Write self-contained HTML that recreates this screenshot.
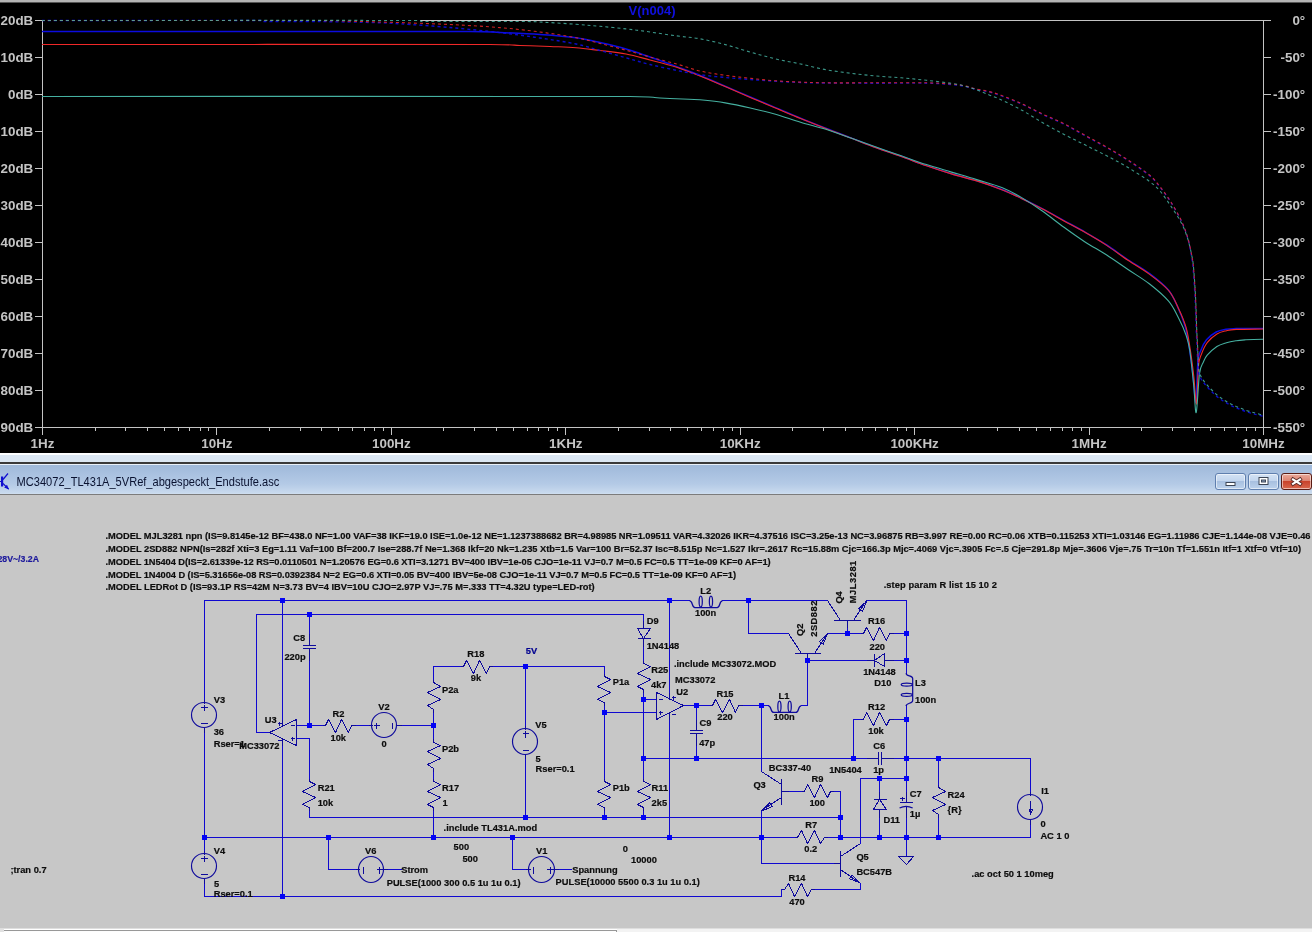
<!DOCTYPE html>
<html lang="de"><head><meta charset="utf-8"><title>LTspice</title>
<style>
html,body{margin:0;padding:0;background:#c7c7c7;}
body{width:1312px;height:932px;overflow:hidden;position:relative;font-family:"Liberation Sans",sans-serif;}
svg{display:block;position:absolute;left:0;will-change:transform;}
#plot{top:0;}
#sch{top:495px;}
#sep1{position:absolute;left:0;top:453px;width:1312px;height:2px;background:#fdfeff;}
#sep2{position:absolute;left:0;top:455px;width:1312px;height:7px;background:#dbe7f3;}
#sep3{position:absolute;left:0;top:462px;width:1312px;height:2px;background:#3a3a3a;}
#tbar{position:absolute;left:0;top:464px;width:1312px;height:30px;background:linear-gradient(#e9f0f9 0,#e9f0f9 1px,#9fb9da 1px,#a9c1e0 10px,#b4cae6 20px,#c9daee 29px,#d2e0f0 30px);}
#tline{position:absolute;left:0;top:494px;width:1312px;height:1px;background:#7c7c7c;}
.btn{position:absolute;top:473px;width:29px;height:15px;border:1px solid #5f7fae;border-radius:3px;background:linear-gradient(#d3e2f4 0,#c3d6ee 45%,#a8c0e0 50%,#bcd2ec 100%);box-shadow:inset 0 0 0 1px rgba(255,255,255,.55);}
#bx{border-color:#5a1c14;background:linear-gradient(#eaa99b 0,#dc8472 45%,#c8432c 50%,#d8684e 100%);}
</style></head><body>
<svg id="plot" width="1312" height="453" viewBox="0 0 1312 453">
<rect x="0" y="0" width="1312" height="453" fill="#000"/>
<rect x="0" y="0" width="1312" height="2" fill="#b4b4b4"/>
<rect x="0" y="2" width="1312" height="1" fill="#555"/>
<g stroke="#c4c4c4" stroke-width="1" shape-rendering="crispEdges" fill="none">
<line x1="42.5" y1="20" x2="42.5" y2="435"/>
<line x1="1263.5" y1="20" x2="1263.5" y2="435"/>
<line x1="35" y1="427.5" x2="1264" y2="427.5"/>
<line x1="420" y1="20.5" x2="1271" y2="20.5"/>
<line x1="35" y1="20.5" x2="42" y2="20.5"/>
<line x1="1264" y1="20.5" x2="1271" y2="20.5"/>
<line x1="35" y1="57.5" x2="42" y2="57.5"/>
<line x1="1264" y1="57.5" x2="1271" y2="57.5"/>
<line x1="35" y1="94.5" x2="42" y2="94.5"/>
<line x1="1264" y1="94.5" x2="1271" y2="94.5"/>
<line x1="35" y1="131.5" x2="42" y2="131.5"/>
<line x1="1264" y1="131.5" x2="1271" y2="131.5"/>
<line x1="35" y1="168.5" x2="42" y2="168.5"/>
<line x1="1264" y1="168.5" x2="1271" y2="168.5"/>
<line x1="35" y1="205.5" x2="42" y2="205.5"/>
<line x1="1264" y1="205.5" x2="1271" y2="205.5"/>
<line x1="35" y1="242.5" x2="42" y2="242.5"/>
<line x1="1264" y1="242.5" x2="1271" y2="242.5"/>
<line x1="35" y1="279.5" x2="42" y2="279.5"/>
<line x1="1264" y1="279.5" x2="1271" y2="279.5"/>
<line x1="35" y1="316.5" x2="42" y2="316.5"/>
<line x1="1264" y1="316.5" x2="1271" y2="316.5"/>
<line x1="35" y1="353.5" x2="42" y2="353.5"/>
<line x1="1264" y1="353.5" x2="1271" y2="353.5"/>
<line x1="35" y1="390.5" x2="42" y2="390.5"/>
<line x1="1264" y1="390.5" x2="1271" y2="390.5"/>
<line x1="35" y1="427.5" x2="42" y2="427.5"/>
<line x1="1264" y1="427.5" x2="1271" y2="427.5"/>
<line x1="95.5" y1="427" x2="95.5" y2="431"/>
<line x1="125.5" y1="427" x2="125.5" y2="431"/>
<line x1="147.5" y1="427" x2="147.5" y2="431"/>
<line x1="164.5" y1="427" x2="164.5" y2="431"/>
<line x1="178.5" y1="427" x2="178.5" y2="431"/>
<line x1="189.5" y1="427" x2="189.5" y2="431"/>
<line x1="200.5" y1="427" x2="200.5" y2="431"/>
<line x1="208.5" y1="427" x2="208.5" y2="431"/>
<line x1="216.5" y1="427" x2="216.5" y2="435"/>
<line x1="269.5" y1="427" x2="269.5" y2="431"/>
<line x1="300.5" y1="427" x2="300.5" y2="431"/>
<line x1="321.5" y1="427" x2="321.5" y2="431"/>
<line x1="338.5" y1="427" x2="338.5" y2="431"/>
<line x1="352.5" y1="427" x2="352.5" y2="431"/>
<line x1="364.5" y1="427" x2="364.5" y2="431"/>
<line x1="374.5" y1="427" x2="374.5" y2="431"/>
<line x1="383.5" y1="427" x2="383.5" y2="431"/>
<line x1="391.5" y1="427" x2="391.5" y2="435"/>
<line x1="443.5" y1="427" x2="443.5" y2="431"/>
<line x1="474.5" y1="427" x2="474.5" y2="431"/>
<line x1="496.5" y1="427" x2="496.5" y2="431"/>
<line x1="513.5" y1="427" x2="513.5" y2="431"/>
<line x1="527.5" y1="427" x2="527.5" y2="431"/>
<line x1="538.5" y1="427" x2="538.5" y2="431"/>
<line x1="548.5" y1="427" x2="548.5" y2="431"/>
<line x1="557.5" y1="427" x2="557.5" y2="431"/>
<line x1="565.5" y1="427" x2="565.5" y2="435"/>
<line x1="618.5" y1="427" x2="618.5" y2="431"/>
<line x1="649.5" y1="427" x2="649.5" y2="431"/>
<line x1="670.5" y1="427" x2="670.5" y2="431"/>
<line x1="687.5" y1="427" x2="687.5" y2="431"/>
<line x1="701.5" y1="427" x2="701.5" y2="431"/>
<line x1="713.5" y1="427" x2="713.5" y2="431"/>
<line x1="723.5" y1="427" x2="723.5" y2="431"/>
<line x1="732.5" y1="427" x2="732.5" y2="431"/>
<line x1="740.5" y1="427" x2="740.5" y2="435"/>
<line x1="792.5" y1="427" x2="792.5" y2="431"/>
<line x1="823.5" y1="427" x2="823.5" y2="431"/>
<line x1="845.5" y1="427" x2="845.5" y2="431"/>
<line x1="862.5" y1="427" x2="862.5" y2="431"/>
<line x1="875.5" y1="427" x2="875.5" y2="431"/>
<line x1="887.5" y1="427" x2="887.5" y2="431"/>
<line x1="897.5" y1="427" x2="897.5" y2="431"/>
<line x1="906.5" y1="427" x2="906.5" y2="431"/>
<line x1="914.5" y1="427" x2="914.5" y2="435"/>
<line x1="967.5" y1="427" x2="967.5" y2="431"/>
<line x1="997.5" y1="427" x2="997.5" y2="431"/>
<line x1="1019.5" y1="427" x2="1019.5" y2="431"/>
<line x1="1036.5" y1="427" x2="1036.5" y2="431"/>
<line x1="1050.5" y1="427" x2="1050.5" y2="431"/>
<line x1="1062.5" y1="427" x2="1062.5" y2="431"/>
<line x1="1072.5" y1="427" x2="1072.5" y2="431"/>
<line x1="1081.5" y1="427" x2="1081.5" y2="431"/>
<line x1="1089.5" y1="427" x2="1089.5" y2="435"/>
<line x1="1141.5" y1="427" x2="1141.5" y2="431"/>
<line x1="1172.5" y1="427" x2="1172.5" y2="431"/>
<line x1="1194.5" y1="427" x2="1194.5" y2="431"/>
<line x1="1210.5" y1="427" x2="1210.5" y2="431"/>
<line x1="1224.5" y1="427" x2="1224.5" y2="431"/>
<line x1="1236.5" y1="427" x2="1236.5" y2="431"/>
<line x1="1246.5" y1="427" x2="1246.5" y2="431"/>
<line x1="1255.5" y1="427" x2="1255.5" y2="431"/>
</g>
<path d="M42.0,31.5 C113.3,31.5 393.7,31.3 470.0,31.5 C500.0,31.7 488.3,32.0 500.0,32.5 C511.7,33.0 527.3,33.6 540.0,34.5 C552.7,35.4 566.0,36.4 576.0,37.7 C586.0,39.0 591.7,40.6 600.0,42.5 C608.3,44.4 617.7,46.6 626.0,49.0 C634.3,51.4 641.5,54.1 650.0,57.0 C658.5,59.9 668.4,63.5 676.7,66.6 C685.0,69.7 691.9,72.2 700.0,75.5 C708.1,78.8 716.8,82.6 725.2,86.2 C733.6,89.8 741.9,93.4 750.3,97.0 C758.7,100.6 767.1,104.1 775.5,107.6 C783.9,111.1 792.2,114.8 800.6,118.2 C809.0,121.7 817.4,125.0 825.8,128.3 C834.2,131.6 842.5,134.7 850.9,137.9 C859.3,141.1 867.6,144.4 876.0,147.5 C884.4,150.6 892.8,153.3 901.2,156.3 C909.6,159.3 918.0,162.7 926.4,165.6 C934.8,168.5 943.1,171.2 951.5,173.7 C959.9,176.2 968.3,178.1 976.7,180.7 C985.1,183.3 994.4,186.6 1001.8,189.5 C1009.2,192.4 1014.5,195.0 1021.3,198.2 C1028.1,201.4 1035.6,205.2 1042.7,208.9 C1049.8,212.6 1056.9,216.7 1064.0,220.6 C1071.1,224.5 1078.3,228.2 1085.4,232.3 C1092.5,236.4 1099.6,240.4 1106.7,245.0 C1113.8,249.6 1120.9,255.1 1128.0,259.8 C1135.1,264.5 1142.6,268.4 1149.3,273.4 C1156.0,278.4 1163.5,284.2 1168.2,289.8 C1172.9,295.4 1174.9,300.9 1177.7,307.0 C1180.5,313.1 1183.3,320.0 1185.2,326.5 C1187.1,333.0 1187.7,337.9 1189.0,346.0 C1190.3,354.1 1191.8,365.7 1192.9,375.0 C1194.1,384.3 1195.1,404.2 1195.9,402.0 C1196.7,399.8 1197.1,370.6 1197.9,362.0 C1198.7,353.4 1199.4,354.1 1200.8,350.4 C1202.2,346.7 1203.9,342.9 1206.5,339.8 C1209.1,336.7 1213.0,333.8 1216.2,332.0 C1219.5,330.2 1222.7,329.8 1226.0,329.2 C1229.3,328.6 1230.0,328.7 1236.2,328.6 C1242.4,328.5 1258.5,328.5 1263.0,328.5" fill="none" stroke="#0c0ce0" stroke-width="1.5" stroke-linejoin="round"/>
<path d="M42.0,44.5 C116.7,44.5 410.3,44.3 490.0,44.5 C520.0,44.7 510.0,45.2 520.0,45.5 C530.0,45.8 540.7,46.1 550.0,46.5 C559.3,46.9 567.7,47.0 576.0,47.7 C584.3,48.4 591.7,49.5 600.0,50.5 C608.3,51.5 617.7,52.4 626.0,54.0 C634.3,55.6 641.5,57.8 650.0,60.0 C658.5,62.2 668.4,64.6 676.7,67.3 C685.0,70.0 691.9,72.8 700.0,76.0 C708.1,79.2 716.8,83.0 725.2,86.6 C733.6,90.2 741.9,93.8 750.3,97.4 C758.7,101.0 767.1,104.5 775.5,108.0 C783.9,111.5 792.2,115.1 800.6,118.5 C809.0,121.9 817.4,125.3 825.8,128.6 C834.2,131.9 842.5,134.9 850.9,138.1 C859.3,141.3 867.6,144.6 876.0,147.7 C884.4,150.8 892.8,153.5 901.2,156.5 C909.6,159.5 918.0,162.9 926.4,165.8 C934.8,168.7 943.1,171.4 951.5,173.9 C959.9,176.4 968.3,178.3 976.7,180.9 C985.1,183.5 994.4,186.8 1001.8,189.7 C1009.2,192.6 1014.5,195.2 1021.3,198.4 C1028.1,201.6 1035.6,205.3 1042.7,209.1 C1049.8,212.8 1056.9,217.0 1064.0,220.9 C1071.1,224.8 1078.3,228.5 1085.4,232.6 C1092.5,236.7 1099.6,240.8 1106.7,245.4 C1113.8,250.0 1120.9,255.5 1128.0,260.3 C1135.1,265.1 1142.5,269.1 1149.3,274.1 C1156.1,279.1 1163.8,284.9 1168.6,290.5 C1173.4,296.1 1175.4,301.8 1178.3,307.9 C1181.2,314.0 1184.1,320.8 1186.0,327.2 C1187.9,333.6 1188.5,338.4 1189.8,346.5 C1191.1,354.6 1192.6,365.9 1193.7,375.5 C1194.8,385.1 1195.8,405.6 1196.6,404.0 C1197.4,402.4 1197.7,374.1 1198.5,365.8 C1199.3,357.5 1200.0,358.1 1201.4,354.2 C1202.9,350.3 1204.6,346.1 1207.2,342.7 C1209.8,339.3 1213.7,336.0 1216.9,334.0 C1220.1,332.0 1223.3,331.5 1226.5,330.7 C1229.7,329.9 1230.1,329.7 1236.2,329.4 C1242.3,329.1 1258.5,329.1 1263.0,329.0" fill="none" stroke="#f02828" stroke-width="1.1" stroke-linejoin="round"/>
<path d="M42.0,96.5 C140.0,96.5 527.0,96.2 630.0,96.5 C660.0,96.8 650.2,97.5 660.0,98.0 C669.8,98.5 682.3,99.0 689.0,99.3 C695.7,99.6 694.0,99.2 700.0,99.8 C706.0,100.4 716.8,101.5 725.2,102.9 C733.6,104.3 741.9,106.1 750.3,108.0 C758.7,109.9 767.1,111.9 775.5,114.3 C783.9,116.7 792.2,119.8 800.6,122.3 C809.0,124.8 817.4,126.7 825.8,129.3 C834.2,131.9 842.5,135.2 850.9,138.1 C859.3,141.0 867.6,144.1 876.0,147.0 C884.4,149.9 892.8,152.9 901.2,155.8 C909.6,158.7 918.0,161.9 926.4,164.6 C934.8,167.3 943.1,169.6 951.5,172.1 C959.9,174.6 968.3,177.0 976.7,179.6 C985.1,182.2 994.4,184.5 1001.8,187.5 C1009.2,190.5 1014.5,193.4 1021.3,197.4 C1028.1,201.4 1035.6,206.3 1042.7,211.3 C1049.8,216.3 1056.9,222.2 1064.0,227.3 C1071.1,232.5 1078.3,237.6 1085.4,242.2 C1092.5,246.8 1099.6,250.4 1106.7,255.0 C1113.8,259.6 1120.9,264.7 1128.0,269.5 C1135.1,274.3 1142.5,278.5 1149.3,283.8 C1156.1,289.1 1163.8,295.6 1168.6,301.2 C1173.4,306.8 1175.4,312.0 1178.3,317.6 C1181.2,323.2 1184.1,329.5 1186.0,335.0 C1187.9,340.5 1188.5,342.0 1189.8,350.4 C1191.1,358.8 1192.6,374.8 1193.7,385.1 C1194.8,395.5 1195.2,414.4 1196.2,412.5 C1197.2,410.6 1198.3,382.0 1199.5,373.6 C1200.7,365.2 1202.1,365.1 1203.4,362.0 C1204.7,358.9 1205.0,357.8 1207.2,355.2 C1209.5,352.6 1213.7,348.6 1216.9,346.5 C1220.1,344.4 1223.3,343.7 1226.5,342.7 C1229.7,341.7 1233.0,341.2 1236.2,340.7 C1239.4,340.2 1241.3,340.1 1245.8,339.8 C1250.3,339.6 1260.1,339.3 1263.0,339.2" fill="none" stroke="#45b0a0" stroke-width="1.1" stroke-linejoin="round"/>
<path d="M42.0,20.5 C78.7,20.5 225.2,20.3 262.0,20.5 C263.0,20.7 262.0,21.3 263.0,21.5 C272.7,21.7 301.3,21.4 320.0,21.6 C338.7,21.8 361.7,22.2 375.0,22.6 C388.3,23.0 387.5,23.0 400.0,23.8 C412.5,24.6 433.3,26.0 450.0,27.5 C466.7,29.0 485.0,30.9 500.0,32.6 C515.0,34.4 527.3,36.1 540.0,38.0 C552.7,39.9 566.0,41.9 576.0,44.0 C586.0,46.1 591.7,48.2 600.0,50.5 C608.3,52.8 617.7,55.5 626.0,57.8 C634.3,60.1 641.5,62.4 650.0,64.5 C658.5,66.6 668.4,68.7 676.7,70.4 C685.0,72.1 691.9,73.5 700.0,74.7 C708.1,75.9 716.8,76.7 725.2,77.5 C733.6,78.3 741.9,78.9 750.3,79.5 C758.7,80.1 767.1,80.8 775.5,81.3 C783.9,81.8 792.2,82.2 800.6,82.5 C809.0,82.8 813.2,82.9 825.8,83.0 C838.4,83.1 859.2,83.2 876.0,83.2 C892.8,83.2 913.8,83.0 926.4,83.2 C939.0,83.4 945.2,84.0 951.5,84.5 C957.8,85.0 959.9,85.4 964.1,86.2 C968.3,87.0 972.5,88.5 976.7,89.5 C980.9,90.5 985.3,91.0 989.2,92.0 C993.1,93.0 994.6,93.3 1000.0,95.3 C1005.4,97.3 1014.2,100.7 1021.3,103.9 C1028.4,107.1 1035.6,111.1 1042.7,114.5 C1049.8,117.9 1056.9,120.5 1064.0,124.1 C1071.1,127.7 1078.3,132.0 1085.4,135.9 C1092.5,139.8 1099.6,143.5 1106.7,147.6 C1113.8,151.7 1120.9,155.8 1128.0,160.4 C1135.1,165.0 1144.1,171.0 1149.4,175.4 C1154.7,179.8 1156.5,182.7 1160.0,187.1 C1163.5,191.5 1167.1,196.3 1170.7,202.0 C1174.3,207.7 1178.6,215.2 1181.4,221.3 C1184.2,227.4 1186.1,232.3 1187.8,238.3 C1189.5,244.3 1190.7,251.9 1191.6,257.1 C1192.5,262.3 1192.6,262.4 1193.2,269.3 C1193.8,276.2 1194.6,288.7 1195.1,298.3 C1195.6,307.9 1195.8,319.2 1196.1,327.2 C1196.4,335.2 1196.8,340.1 1197.1,346.5 C1197.4,352.9 1197.5,360.8 1198.0,365.8 C1198.5,370.8 1198.4,373.0 1199.8,376.4 C1201.2,379.8 1203.8,382.9 1206.6,386.2 C1209.3,389.5 1213.1,393.2 1216.3,396.0 C1219.5,398.8 1222.8,400.8 1226.0,402.7 C1229.2,404.6 1232.5,406.2 1235.8,407.6 C1239.0,409.1 1242.3,410.3 1245.5,411.4 C1248.7,412.5 1252.3,413.5 1255.2,414.3 C1258.1,415.1 1261.7,415.9 1263.0,416.2" fill="none" stroke="#0c0ce0" stroke-width="1.4" stroke-dasharray="3 3" stroke-opacity="0.9" stroke-linejoin="round"/>
<path d="M42.0,20.5 C85.0,20.5 248.7,20.4 300.0,20.5 C350.0,20.6 333.3,20.8 350.0,21.2 C366.7,21.6 383.3,22.1 400.0,22.6 C416.7,23.2 433.3,23.7 450.0,24.5 C466.7,25.3 485.0,26.4 500.0,27.6 C515.0,28.9 527.3,30.3 540.0,32.0 C552.7,33.7 566.0,35.8 576.0,37.7 C586.0,39.6 591.7,41.4 600.0,43.5 C608.3,45.6 617.7,48.0 626.0,50.2 C634.3,52.5 641.5,54.7 650.0,57.0 C658.5,59.3 668.4,61.7 676.7,64.0 C685.0,66.3 691.9,69.1 700.0,71.0 C708.1,72.9 716.8,74.1 725.2,75.3 C733.6,76.5 741.9,77.4 750.3,78.3 C758.7,79.2 767.1,80.2 775.5,80.8 C783.9,81.4 792.2,81.8 800.6,82.1 C809.0,82.4 813.2,82.7 825.8,82.8 C838.4,82.9 859.2,82.8 876.0,82.8 C892.8,82.8 913.8,82.6 926.4,82.8 C939.0,83.0 945.2,83.6 951.5,84.1 C957.8,84.6 959.9,85.0 964.1,85.8 C968.3,86.6 972.5,88.1 976.7,89.1 C980.9,90.1 985.3,90.6 989.2,91.6 C993.1,92.6 994.6,92.9 1000.0,94.9 C1005.4,96.9 1014.2,100.3 1021.3,103.5 C1028.4,106.7 1035.6,110.7 1042.7,114.1 C1049.8,117.5 1056.9,120.1 1064.0,123.7 C1071.1,127.3 1078.3,131.6 1085.4,135.5 C1092.5,139.4 1099.6,143.1 1106.7,147.2 C1113.8,151.3 1120.9,155.4 1128.0,160.0 C1135.1,164.6 1144.1,170.6 1149.4,175.0 C1154.7,179.4 1156.5,182.3 1160.0,186.7 C1163.5,191.1 1167.1,195.9 1170.7,201.6 C1174.3,207.3 1178.6,214.8 1181.4,220.9 C1184.2,227.0 1186.0,231.9 1187.8,237.9 C1189.6,243.9 1191.1,251.9 1192.1,257.1 C1193.1,262.3 1193.1,262.4 1193.7,269.3 C1194.3,276.2 1195.1,288.7 1195.6,298.3 C1196.1,307.9 1196.3,319.2 1196.6,327.2 C1196.9,335.2 1197.3,340.1 1197.6,346.5 C1197.9,352.9 1198.3,362.6 1198.5,365.8" fill="none" stroke="#f02828" stroke-width="1.1" stroke-dasharray="3 3" stroke-opacity="0.85" stroke-linejoin="round"/>
<path d="M42.0,20.5 C105.0,20.5 356.8,20.3 420.0,20.5 C421.0,20.7 420.0,21.3 421.0,21.5 C437.7,21.7 499.3,21.4 520.0,21.5 C540.7,21.6 535.7,21.8 545.0,22.3 C554.3,22.8 566.8,23.6 576.0,24.3 C585.2,25.0 591.7,25.5 600.0,26.3 C608.3,27.1 617.7,27.9 626.0,28.9 C634.3,29.8 641.5,30.8 650.0,32.0 C658.5,33.2 668.4,34.8 676.7,35.9 C685.0,37.0 691.9,37.3 700.0,38.8 C708.1,40.2 716.8,42.4 725.2,44.6 C733.6,46.8 741.9,49.7 750.3,52.1 C758.7,54.5 767.1,56.9 775.5,58.9 C783.9,60.9 792.2,62.2 800.6,64.0 C809.0,65.8 817.4,68.2 825.8,69.7 C834.2,71.2 842.5,72.2 850.9,73.3 C859.3,74.3 867.7,75.2 876.1,76.0 C884.5,76.8 892.8,77.1 901.2,77.8 C909.6,78.5 918.0,79.4 926.4,80.3 C934.8,81.2 945.2,82.4 951.5,83.3 C957.8,84.2 959.9,84.7 964.1,85.8 C968.3,86.9 972.5,88.4 976.7,89.9 C980.9,91.4 985.3,93.4 989.2,94.9 C993.1,96.5 994.6,96.7 1000.0,99.2 C1005.4,101.7 1014.2,106.0 1021.3,109.9 C1028.4,113.8 1035.6,118.6 1042.7,122.7 C1049.8,126.8 1056.9,130.7 1064.0,134.4 C1071.1,138.1 1078.3,141.5 1085.4,145.1 C1092.5,148.7 1099.6,152.1 1106.7,155.8 C1113.8,159.5 1120.9,163.2 1128.0,167.5 C1135.1,171.8 1144.1,177.5 1149.4,181.4 C1154.7,185.3 1156.5,186.9 1160.0,191.0 C1163.5,195.1 1167.1,200.6 1170.7,205.9 C1174.3,211.2 1178.6,217.5 1181.4,223.0 C1184.2,228.5 1186.0,233.3 1187.8,239.0 C1189.6,244.7 1191.1,252.1 1192.1,257.1 C1193.1,262.2 1193.1,262.4 1193.7,269.3 C1194.3,276.2 1195.1,288.7 1195.6,298.3 C1196.1,307.9 1196.3,319.2 1196.6,327.2 C1196.9,335.2 1197.3,340.1 1197.6,346.5 C1197.9,352.9 1198.0,361.0 1198.5,365.8 C1199.0,370.6 1199.0,372.3 1200.5,375.5 C1202.0,378.7 1204.5,381.9 1207.2,385.1 C1209.9,388.3 1213.7,392.1 1216.9,394.8 C1220.1,397.5 1223.3,399.6 1226.5,401.5 C1229.7,403.4 1233.0,404.9 1236.2,406.4 C1239.4,407.8 1242.6,409.1 1245.8,410.2 C1249.0,411.3 1252.6,412.3 1255.5,413.1 C1258.4,413.9 1261.8,414.9 1263.0,415.2" fill="none" stroke="#45b0a0" stroke-width="1.1" stroke-dasharray="3 3" stroke-opacity="0.85" stroke-linejoin="round"/>
<g font-family="Liberation Sans, sans-serif" font-weight="bold" font-size="13.4px" fill="#c4c4c4">
<text x="33.3" y="25.2" text-anchor="end">20dB</text>
<text x="33.3" y="62.2" text-anchor="end">10dB</text>
<text x="33.3" y="99.2" text-anchor="end">0dB</text>
<text x="33.3" y="136.2" text-anchor="end">-<tspan dx="3">10dB</tspan></text>
<text x="33.3" y="173.2" text-anchor="end">-<tspan dx="3">20dB</tspan></text>
<text x="33.3" y="210.2" text-anchor="end">-<tspan dx="3">30dB</tspan></text>
<text x="33.3" y="247.2" text-anchor="end">-<tspan dx="3">40dB</tspan></text>
<text x="33.3" y="284.2" text-anchor="end">-<tspan dx="3">50dB</tspan></text>
<text x="33.3" y="321.2" text-anchor="end">-<tspan dx="3">60dB</tspan></text>
<text x="33.3" y="358.2" text-anchor="end">-<tspan dx="3">70dB</tspan></text>
<text x="33.3" y="395.2" text-anchor="end">-<tspan dx="3">80dB</tspan></text>
<text x="33.3" y="432.2" text-anchor="end">-<tspan dx="3">90dB</tspan></text>
<text x="1305.2" y="25.1" text-anchor="end">0°</text>
<text x="1305.2" y="62.1" text-anchor="end">-50°</text>
<text x="1305.2" y="99.1" text-anchor="end">-100°</text>
<text x="1305.2" y="136.1" text-anchor="end">-150°</text>
<text x="1305.2" y="173.1" text-anchor="end">-200°</text>
<text x="1305.2" y="210.1" text-anchor="end">-250°</text>
<text x="1305.2" y="247.1" text-anchor="end">-300°</text>
<text x="1305.2" y="284.1" text-anchor="end">-350°</text>
<text x="1305.2" y="321.1" text-anchor="end">-400°</text>
<text x="1305.2" y="358.1" text-anchor="end">-450°</text>
<text x="1305.2" y="395.1" text-anchor="end">-500°</text>
<text x="1305.2" y="432.1" text-anchor="end">-550°</text>
<text x="42.5" y="448" text-anchor="middle">1Hz</text>
<text x="216.9" y="448" text-anchor="middle">10Hz</text>
<text x="391.4" y="448" text-anchor="middle">100Hz</text>
<text x="565.8" y="448" text-anchor="middle">1KHz</text>
<text x="740.2" y="448" text-anchor="middle">10KHz</text>
<text x="914.6" y="448" text-anchor="middle">100KHz</text>
<text x="1089.1" y="448" text-anchor="middle">1MHz</text>
<text x="1263.5" y="448" text-anchor="middle">10MHz</text>
</g>
<text x="652" y="15.4" text-anchor="middle" font-family="Liberation Sans, sans-serif" font-weight="bold" font-size="13px" fill="#1010e0">V(n004)</text>
</svg>
<div id="sep1"></div><div id="sep2"></div><div id="sep3"></div>
<div id="tbar"></div><div id="tline"></div>
<svg id="ico" width="12" height="20" viewBox="0 0 12 20" style="top:471px"><g stroke="#1010d0" fill="none" stroke-width="1.2"><path d="M-1 10.5H2M3 8.5L8 2.5M3 12.5L8.6 18.2"/></g><rect x="1" y="5.5" width="2.2" height="10" fill="#1010d0"/><path d="M9 18.6L4.2 16.6L7 13.8Z" fill="#1010d0"/></svg>
<svg id="ttl" width="300" height="30" viewBox="0 464 300 30" style="top:464px"><text x="16.6" y="485.8" font-family="Liberation Sans, sans-serif" font-size="12.4px" fill="#0a1230" textLength="262.6" lengthAdjust="spacingAndGlyphs">MC34072_TL431A_5VRef_abgespeckt_Endstufe.asc</text></svg>
<div class="btn" style="left:1215px"><svg width="29" height="15" style="top:0"><rect x="10" y="8.5" width="9" height="3" fill="#fff" stroke="#3c4656" stroke-width="1"/></svg></div>
<div class="btn" style="left:1248px"><svg width="29" height="15" style="top:0"><rect x="10" y="3.5" width="9" height="7" fill="#fff" stroke="#3c4656" stroke-width="1"/><rect x="12.5" y="6" width="4" height="2" fill="#8ea2c0" stroke="#3c4656" stroke-width="1"/></svg></div>
<div class="btn" id="bx" style="left:1281px"><svg width="29" height="15" style="top:0"><path d="M11 5.4L18 9.8M18 5.4L11 9.8" stroke="#5a2a26" stroke-width="3.8" stroke-linecap="square"/><path d="M11 5.4L18 9.8M18 5.4L11 9.8" stroke="#fff" stroke-width="2.1" stroke-linecap="square"/></svg></div>
<svg id="sch" width="1312" height="437" viewBox="0 495 1312 437">
<rect x="0" y="495" width="1312" height="437" fill="#c7c7c7"/>
<g stroke="#1008d0" stroke-width="1" fill="none" shape-rendering="crispEdges">
<line x1="204.5" y1="600.5" x2="689.5" y2="600.5" stroke-linecap="square"/>
<line x1="204.5" y1="600.5" x2="204.5" y2="699.5" stroke-linecap="square"/>
<line x1="204.5" y1="732.5" x2="204.5" y2="850.5" stroke-linecap="square"/>
<line x1="204.5" y1="883.5" x2="204.5" y2="896.5" stroke-linecap="square"/>
<line x1="204.5" y1="896.5" x2="781.5" y2="896.5" stroke-linecap="square"/>
<line x1="282.5" y1="600.5" x2="282.5" y2="719.5" stroke-linecap="square"/>
<line x1="282.5" y1="745.5" x2="282.5" y2="896.5" stroke-linecap="square"/>
<line x1="256.5" y1="614.5" x2="643.5" y2="614.5" stroke-linecap="square"/>
<line x1="256.5" y1="614.5" x2="256.5" y2="732.5" stroke-linecap="square"/>
<line x1="256.5" y1="732.5" x2="269.5" y2="732.5" stroke-linecap="square"/>
<line x1="309.5" y1="614.5" x2="309.5" y2="633.5" stroke-linecap="square"/>
<line x1="309.5" y1="660.5" x2="309.5" y2="725.5" stroke-linecap="square"/>
<line x1="296.5" y1="725.5" x2="322.5" y2="725.5" stroke-linecap="square"/>
<line x1="355.5" y1="725.5" x2="368.5" y2="725.5" stroke-linecap="square"/>
<line x1="401.5" y1="725.5" x2="433.5" y2="725.5" stroke-linecap="square"/>
<line x1="296.5" y1="738.5" x2="309.5" y2="738.5" stroke-linecap="square"/>
<line x1="309.5" y1="738.5" x2="309.5" y2="778.5" stroke-linecap="square"/>
<line x1="309.5" y1="810.5" x2="309.5" y2="817.5" stroke-linecap="square"/>
<line x1="309.5" y1="817.5" x2="840.5" y2="817.5" stroke-linecap="square"/>
<line x1="433.5" y1="666.5" x2="433.5" y2="679.5" stroke-linecap="square"/>
<line x1="433.5" y1="712.5" x2="433.5" y2="738.5" stroke-linecap="square"/>
<line x1="433.5" y1="771.5" x2="433.5" y2="778.5" stroke-linecap="square"/>
<line x1="433.5" y1="810.5" x2="433.5" y2="837.5" stroke-linecap="square"/>
<line x1="433.5" y1="666.5" x2="460.5" y2="666.5" stroke-linecap="square"/>
<line x1="492.5" y1="666.5" x2="604.5" y2="666.5" stroke-linecap="square"/>
<line x1="604.5" y1="666.5" x2="604.5" y2="673.5" stroke-linecap="square"/>
<line x1="604.5" y1="705.5" x2="604.5" y2="778.5" stroke-linecap="square"/>
<line x1="604.5" y1="810.5" x2="604.5" y2="817.5" stroke-linecap="square"/>
<line x1="525.5" y1="666.5" x2="525.5" y2="725.5" stroke-linecap="square"/>
<line x1="525.5" y1="758.5" x2="525.5" y2="817.5" stroke-linecap="square"/>
<line x1="604.5" y1="712.5" x2="656.5" y2="712.5" stroke-linecap="square"/>
<line x1="643.5" y1="614.5" x2="643.5" y2="620.5" stroke-linecap="square"/>
<line x1="643.5" y1="646.5" x2="643.5" y2="660.5" stroke-linecap="square"/>
<line x1="643.5" y1="692.5" x2="643.5" y2="778.5" stroke-linecap="square"/>
<line x1="643.5" y1="810.5" x2="643.5" y2="817.5" stroke-linecap="square"/>
<line x1="643.5" y1="699.5" x2="656.5" y2="699.5" stroke-linecap="square"/>
<line x1="643.5" y1="758.5" x2="866.5" y2="758.5" stroke-linecap="square"/>
<line x1="893.5" y1="758.5" x2="1030.5" y2="758.5" stroke-linecap="square"/>
<line x1="1030.5" y1="758.5" x2="1030.5" y2="791.5" stroke-linecap="square"/>
<line x1="1030.5" y1="824.5" x2="1030.5" y2="837.5" stroke-linecap="square"/>
<line x1="669.5" y1="600.5" x2="669.5" y2="692.5" stroke-linecap="square"/>
<line x1="669.5" y1="719.5" x2="669.5" y2="837.5" stroke-linecap="square"/>
<line x1="683.5" y1="705.5" x2="709.5" y2="705.5" stroke-linecap="square"/>
<line x1="742.5" y1="705.5" x2="768.5" y2="705.5" stroke-linecap="square"/>
<line x1="801.5" y1="705.5" x2="807.5" y2="705.5" stroke-linecap="square"/>
<line x1="807.5" y1="705.5" x2="807.5" y2="660.5" stroke-linecap="square"/>
<line x1="696.5" y1="705.5" x2="696.5" y2="719.5" stroke-linecap="square"/>
<line x1="696.5" y1="745.5" x2="696.5" y2="758.5" stroke-linecap="square"/>
<line x1="722.5" y1="600.5" x2="827.5" y2="600.5" stroke-linecap="square"/>
<line x1="748.5" y1="600.5" x2="748.5" y2="633.5" stroke-linecap="square"/>
<line x1="748.5" y1="633.5" x2="788.5" y2="633.5" stroke-linecap="square"/>
<line x1="827.5" y1="633.5" x2="860.5" y2="633.5" stroke-linecap="square"/>
<line x1="847.5" y1="627.5" x2="847.5" y2="633.5" stroke-linecap="square"/>
<line x1="893.5" y1="633.5" x2="906.5" y2="633.5" stroke-linecap="square"/>
<line x1="866.5" y1="600.5" x2="906.5" y2="600.5" stroke-linecap="square"/>
<line x1="906.5" y1="600.5" x2="906.5" y2="673.5" stroke-linecap="square"/>
<line x1="906.5" y1="705.5" x2="906.5" y2="791.5" stroke-linecap="square"/>
<line x1="906.5" y1="817.5" x2="906.5" y2="856.5" stroke-linecap="square"/>
<line x1="807.5" y1="660.5" x2="866.5" y2="660.5" stroke-linecap="square"/>
<line x1="893.5" y1="660.5" x2="906.5" y2="660.5" stroke-linecap="square"/>
<line x1="853.5" y1="758.5" x2="853.5" y2="719.5" stroke-linecap="square"/>
<line x1="853.5" y1="719.5" x2="860.5" y2="719.5" stroke-linecap="square"/>
<line x1="893.5" y1="719.5" x2="906.5" y2="719.5" stroke-linecap="square"/>
<line x1="761.5" y1="705.5" x2="761.5" y2="771.5" stroke-linecap="square"/>
<line x1="761.5" y1="810.5" x2="761.5" y2="863.5" stroke-linecap="square"/>
<line x1="761.5" y1="863.5" x2="833.5" y2="863.5" stroke-linecap="square"/>
<line x1="788.5" y1="791.5" x2="801.5" y2="791.5" stroke-linecap="square"/>
<line x1="833.5" y1="791.5" x2="840.5" y2="791.5" stroke-linecap="square"/>
<line x1="840.5" y1="791.5" x2="840.5" y2="837.5" stroke-linecap="square"/>
<line x1="204.5" y1="837.5" x2="794.5" y2="837.5" stroke-linecap="square"/>
<line x1="827.5" y1="837.5" x2="1030.5" y2="837.5" stroke-linecap="square"/>
<line x1="860.5" y1="778.5" x2="906.5" y2="778.5" stroke-linecap="square"/>
<line x1="860.5" y1="778.5" x2="860.5" y2="843.5" stroke-linecap="square"/>
<line x1="860.5" y1="883.5" x2="860.5" y2="889.5" stroke-linecap="square"/>
<line x1="860.5" y1="889.5" x2="814.5" y2="889.5" stroke-linecap="square"/>
<line x1="781.5" y1="889.5" x2="781.5" y2="896.5" stroke-linecap="square"/>
<line x1="879.5" y1="778.5" x2="879.5" y2="791.5" stroke-linecap="square"/>
<line x1="879.5" y1="817.5" x2="879.5" y2="837.5" stroke-linecap="square"/>
<line x1="938.5" y1="758.5" x2="938.5" y2="784.5" stroke-linecap="square"/>
<line x1="938.5" y1="817.5" x2="938.5" y2="837.5" stroke-linecap="square"/>
<line x1="328.5" y1="837.5" x2="328.5" y2="869.5" stroke-linecap="square"/>
<line x1="328.5" y1="869.5" x2="355.5" y2="869.5" stroke-linecap="square"/>
<line x1="387.5" y1="869.5" x2="401.5" y2="869.5" stroke-linecap="square"/>
<line x1="512.5" y1="837.5" x2="512.5" y2="869.5" stroke-linecap="square"/>
<line x1="512.5" y1="869.5" x2="525.5" y2="869.5" stroke-linecap="square"/>
<line x1="558.5" y1="869.5" x2="571.5" y2="869.5" stroke-linecap="square"/>
</g>
<g stroke="#0e0a9c" stroke-width="1" fill="none" shape-rendering="crispEdges" stroke-linejoin="round">
<ellipse cx="204.00" cy="715.00" rx="12.50" ry="12.50" shape-rendering="geometricPrecision" stroke-width="1.15"/>
<polyline points="204.5,699.5 204.5,703.5"/>
<polyline points="204.5,727.5 204.5,732.5"/>
<polyline points="200.5,707.5 207.5,707.5"/>
<polyline points="204.5,704.5 204.5,710.5"/>
<polyline points="200.5,723.5 207.5,723.5"/>
<ellipse cx="204.00" cy="866.00" rx="12.50" ry="12.50" shape-rendering="geometricPrecision" stroke-width="1.15"/>
<polyline points="204.5,850.5 204.5,854.5"/>
<polyline points="204.5,878.5 204.5,883.5"/>
<polyline points="200.5,858.5 207.5,858.5"/>
<polyline points="204.5,855.5 204.5,861.5"/>
<polyline points="200.5,874.5 207.5,874.5"/>
<ellipse cx="525.00" cy="741.50" rx="12.50" ry="13.00" shape-rendering="geometricPrecision" stroke-width="1.15"/>
<polyline points="525.5,725.5 525.5,729.5"/>
<polyline points="525.5,753.5 525.5,758.5"/>
<polyline points="522.5,733.5 528.5,733.5"/>
<polyline points="525.5,730.5 525.5,737.5"/>
<polyline points="522.5,750.5 528.5,750.5"/>
<ellipse cx="384.00" cy="725.00" rx="12.50" ry="12.50" shape-rendering="geometricPrecision" stroke-width="1.15"/>
<polyline points="368.5,725.5 372.5,725.5"/>
<polyline points="396.5,725.5 401.5,725.5"/>
<polyline points="376.5,728.5 376.5,722.5"/>
<polyline points="373.5,725.5 379.5,725.5"/>
<polyline points="392.5,728.5 392.5,722.5"/>
<ellipse cx="371.00" cy="869.50" rx="12.50" ry="13.00" shape-rendering="geometricPrecision" stroke-width="1.15"/>
<polyline points="387.5,869.5 383.5,869.5"/>
<polyline points="359.5,869.5 355.5,869.5"/>
<polyline points="379.5,866.5 379.5,873.5"/>
<polyline points="382.5,869.5 376.5,869.5"/>
<polyline points="363.5,866.5 363.5,873.5"/>
<ellipse cx="541.50" cy="869.50" rx="13.00" ry="13.00" shape-rendering="geometricPrecision" stroke-width="1.15"/>
<polyline points="558.5,869.5 554.5,869.5"/>
<polyline points="530.5,869.5 525.5,869.5"/>
<polyline points="550.5,866.5 550.5,873.5"/>
<polyline points="553.5,869.5 546.5,869.5"/>
<polyline points="533.5,866.5 533.5,873.5"/>
<ellipse cx="1030.00" cy="807.00" rx="12.50" ry="12.50" shape-rendering="geometricPrecision" stroke-width="1.15"/>
<polyline points="1030.5,791.5 1030.5,795.5"/>
<polyline points="1030.5,819.5 1030.5,824.5"/>
<polyline points="1030.5,800.5 1030.5,814.5"/>
<polygon points="1030.5,814.5 1029.5,809.5 1032.5,809.5"/>
<polygon points="296.5,719.5 269.5,732.5 296.5,745.5"/>
<path d="M290.5,725.5H294.5" stroke-linecap="butt"/>
<path d="M290.5,738.5H294.5M292.5,736.5V740.5" stroke-linecap="butt"/>
<polyline points="282.5,719.5 282.5,725.5"/>
<polyline points="282.5,745.5 282.5,738.5"/>
<path d="M277.5,723.5H281.5M279.5,721.5V725.5" stroke-linecap="butt"/>
<path d="M277.5,740.5H281.5" stroke-linecap="butt"/>
<polygon points="656.5,692.5 683.5,705.5 656.5,719.5"/>
<path d="M658.5,699.5H662.5" stroke-linecap="butt"/>
<path d="M658.5,712.5H662.5M660.5,710.5V714.5" stroke-linecap="butt"/>
<polyline points="669.5,692.5 669.5,699.5"/>
<polyline points="669.5,719.5 669.5,712.5"/>
<path d="M671.5,697.5H675.5M673.5,695.5V699.5" stroke-linecap="butt"/>
<path d="M671.5,714.5H675.5" stroke-linecap="butt"/>
<polyline points="309.5,633.5 309.5,645.5"/>
<polyline points="302.5,645.5 315.5,645.5"/>
<polyline points="302.5,648.5 315.5,648.5"/>
<polyline points="309.5,648.5 309.5,660.5"/>
<polyline points="696.5,719.5 696.5,730.5"/>
<polyline points="689.5,730.5 702.5,730.5"/>
<polyline points="689.5,733.5 702.5,733.5"/>
<polyline points="696.5,733.5 696.5,745.5"/>
<polyline points="866.5,758.5 878.5,758.5"/>
<polyline points="878.5,764.5 878.5,751.5"/>
<polyline points="881.5,764.5 881.5,751.5"/>
<polyline points="881.5,758.5 893.5,758.5"/>
<polyline points="906.5,791.5 906.5,802.5"/>
<polyline points="899.5,802.5 912.5,802.5"/>
<polyline points="906.5,806.5 906.5,817.5"/>
<path d="M899.56,808.02 Q906.12,804.54 912.68,808.02" shape-rendering="geometricPrecision" stroke-width="1.25"/>
<polyline points="902.5,796.5 902.5,800.5"/>
<polyline points="899.5,798.5 904.5,798.5"/>
<polyline points="322.5,725.5 325.5,725.5 328.5,719.5 335.5,732.5 341.5,719.5 348.5,732.5 351.5,725.5 355.5,725.5"/>
<polyline points="309.5,778.5 309.5,781.5 315.5,784.5 302.5,791.5 315.5,797.5 302.5,804.5 309.5,807.5 309.5,810.5"/>
<polyline points="433.5,679.5 433.5,682.5 440.5,686.5 427.5,692.5 440.5,699.5 427.5,705.5 433.5,709.5 433.5,712.5"/>
<polyline points="433.5,738.5 433.5,742.5 440.5,745.5 427.5,751.5 440.5,758.5 427.5,764.5 433.5,768.5 433.5,771.5"/>
<polyline points="433.5,778.5 433.5,781.5 440.5,784.5 427.5,791.5 440.5,797.5 427.5,804.5 433.5,807.5 433.5,810.5"/>
<polyline points="460.5,666.5 463.5,666.5 466.5,660.5 473.5,673.5 479.5,660.5 486.5,673.5 489.5,666.5 492.5,666.5"/>
<polyline points="604.5,673.5 604.5,676.5 610.5,679.5 597.5,686.5 610.5,692.5 597.5,699.5 604.5,702.5 604.5,705.5"/>
<polyline points="604.5,778.5 604.5,781.5 610.5,784.5 597.5,791.5 610.5,797.5 597.5,804.5 604.5,807.5 604.5,810.5"/>
<polyline points="643.5,660.5 643.5,663.5 650.5,666.5 637.5,673.5 650.5,679.5 637.5,686.5 643.5,689.5 643.5,692.5"/>
<polyline points="643.5,778.5 643.5,781.5 650.5,784.5 637.5,791.5 650.5,797.5 637.5,804.5 643.5,807.5 643.5,810.5"/>
<polyline points="709.5,705.5 712.5,705.5 715.5,699.5 722.5,712.5 729.5,699.5 735.5,712.5 738.5,705.5 742.5,705.5"/>
<polyline points="860.5,633.5 863.5,633.5 866.5,627.5 873.5,640.5 879.5,627.5 886.5,640.5 889.5,633.5 893.5,633.5"/>
<polyline points="860.5,719.5 863.5,719.5 866.5,712.5 873.5,725.5 879.5,712.5 886.5,725.5 889.5,719.5 893.5,719.5"/>
<polyline points="801.5,791.5 804.5,791.5 807.5,784.5 814.5,797.5 820.5,784.5 827.5,797.5 830.5,791.5 833.5,791.5"/>
<polyline points="794.5,837.5 797.5,837.5 801.5,830.5 807.5,843.5 814.5,830.5 820.5,843.5 824.5,837.5 827.5,837.5"/>
<polyline points="781.5,889.5 784.5,889.5 788.5,883.5 794.5,896.5 801.5,883.5 807.5,896.5 811.5,889.5 814.5,889.5"/>
<polyline points="938.5,784.5 938.5,787.5 945.5,791.5 932.5,797.5 945.5,804.5 932.5,810.5 938.5,814.5 938.5,817.5"/>
<polyline points="643.5,620.5 643.5,628.5"/>
<polygon points="637.5,628.5 650.5,628.5 643.5,638.5"/>
<polyline points="637.5,638.5 650.5,638.5"/>
<polyline points="643.5,638.5 643.5,646.5"/>
<polyline points="893.5,660.5 884.5,660.5"/>
<polygon points="884.5,653.5 884.5,666.5 874.5,660.5"/>
<polyline points="874.5,653.5 874.5,666.5"/>
<polyline points="874.5,660.5 866.5,660.5"/>
<polyline points="879.5,817.5 879.5,809.5"/>
<polygon points="886.5,809.5 873.5,809.5 879.5,799.5"/>
<polyline points="886.5,799.5 873.5,799.5"/>
<polyline points="879.5,799.5 879.5,791.5"/>
<path d="M722.44,600.97 C721.00,600.97 720.39,602.20 719.77,604.25 C719.16,606.30 718.54,607.53 717.11,607.53 L694.97,607.53 C693.53,607.53 692.92,606.30 692.30,604.25 C691.69,602.20 691.07,600.97 689.64,600.97" shape-rendering="geometricPrecision" stroke-width="1.25"/>
<path d="M710.96,596.05 C711.84,596.05 712.56,598.53 712.56,601.59 C712.56,604.64 711.84,607.12 710.96,607.12 C710.08,607.12 709.36,604.64 709.36,601.59 C709.36,598.53 710.08,596.05 710.96,596.05" shape-rendering="geometricPrecision" stroke-width="1.25"/>
<path d="M700.71,596.05 C701.59,596.05 702.31,598.53 702.31,601.59 C702.31,604.64 701.59,607.12 700.71,607.12 C699.83,607.12 699.11,604.64 699.11,601.59 C699.11,598.53 699.83,596.05 700.71,596.05" shape-rendering="geometricPrecision" stroke-width="1.25"/>
<path d="M801.16,705.93 C799.72,705.93 799.11,707.16 798.49,709.21 C797.88,711.26 797.26,712.49 795.83,712.49 L773.69,712.49 C772.25,712.49 771.64,711.26 771.02,709.21 C770.41,707.16 769.79,705.93 768.36,705.93" shape-rendering="geometricPrecision" stroke-width="1.25"/>
<path d="M789.68,701.01 C790.56,701.01 791.28,703.49 791.28,706.55 C791.28,709.60 790.56,712.08 789.68,712.08 C788.80,712.08 788.08,709.60 788.08,706.55 C788.08,703.49 788.80,701.01 789.68,701.01" shape-rendering="geometricPrecision" stroke-width="1.25"/>
<path d="M779.43,701.01 C780.31,701.01 781.03,703.49 781.03,706.55 C781.03,709.60 780.31,712.08 779.43,712.08 C778.55,712.08 777.83,709.60 777.83,706.55 C777.83,703.49 778.55,701.01 779.43,701.01" shape-rendering="geometricPrecision" stroke-width="1.25"/>
<path d="M906.12,673.13 C906.12,674.57 907.35,675.18 909.40,675.80 C911.45,676.41 912.68,677.02 912.68,678.46 L912.68,700.60 C912.68,702.04 911.45,702.65 909.40,703.26 C907.35,703.88 906.12,704.50 906.12,705.93" shape-rendering="geometricPrecision" stroke-width="1.25"/>
<path d="M901.20,684.61 C901.20,683.73 903.68,683.01 906.73,683.01 C909.79,683.01 912.27,683.73 912.27,684.61 C912.27,685.49 909.79,686.21 906.73,686.21 C903.68,686.21 901.20,685.49 901.20,684.61" shape-rendering="geometricPrecision" stroke-width="1.25"/>
<path d="M901.20,694.86 C901.20,693.98 903.68,693.26 906.73,693.26 C909.79,693.26 912.27,693.98 912.27,694.86 C912.27,695.74 909.79,696.46 906.73,696.46 C903.68,696.46 901.20,695.74 901.20,694.86" shape-rendering="geometricPrecision" stroke-width="1.25"/>
<polyline points="794.5,653.5 820.5,653.5"/>
<polyline points="807.5,660.5 807.5,653.5"/>
<polyline points="801.5,653.5 788.5,633.5"/>
<polyline points="814.5,653.5 827.5,633.5"/>
<polygon points="827.4,633.8 823.1,644.3 819.4,641.7"/>
<polyline points="833.5,620.5 860.5,620.5"/>
<polyline points="847.5,627.5 847.5,620.5"/>
<polyline points="840.5,620.5 827.5,600.5"/>
<polyline points="853.5,620.5 866.5,600.5"/>
<polygon points="866.8,601.0 862.5,611.5 858.7,608.9"/>
<polyline points="781.5,778.5 781.5,804.5"/>
<polyline points="788.5,791.5 781.5,791.5"/>
<polyline points="781.5,784.5 761.5,771.5"/>
<polyline points="781.5,797.5 761.5,810.5"/>
<polygon points="761.8,810.9 772.3,806.6 769.8,802.9"/>
<polyline points="840.5,850.5 840.5,876.5"/>
<polyline points="833.5,863.5 840.5,863.5"/>
<polyline points="840.5,856.5 860.5,843.5"/>
<polyline points="840.5,869.5 860.5,883.5"/>
<polygon points="860.2,883.0 849.7,878.8 852.2,875.0"/>
<polygon points="898.5,856.5 913.5,856.5 906.5,864.5"/>
</g>
<g fill="#0404f4" shape-rendering="crispEdges">
<rect x="280.0" y="598.0" width="5" height="5"/>
<rect x="667.0" y="598.0" width="5" height="5"/>
<rect x="746.0" y="598.0" width="5" height="5"/>
<rect x="307.0" y="612.0" width="5" height="5"/>
<rect x="307.0" y="723.0" width="5" height="5"/>
<rect x="431.0" y="723.0" width="5" height="5"/>
<rect x="523.0" y="664.0" width="5" height="5"/>
<rect x="602.0" y="710.0" width="5" height="5"/>
<rect x="641.0" y="697.0" width="5" height="5"/>
<rect x="641.0" y="756.0" width="5" height="5"/>
<rect x="694.0" y="703.0" width="5" height="5"/>
<rect x="694.0" y="756.0" width="5" height="5"/>
<rect x="759.0" y="703.0" width="5" height="5"/>
<rect x="805.0" y="658.0" width="5" height="5"/>
<rect x="845.0" y="631.0" width="5" height="5"/>
<rect x="904.0" y="631.0" width="5" height="5"/>
<rect x="904.0" y="658.0" width="5" height="5"/>
<rect x="904.0" y="717.0" width="5" height="5"/>
<rect x="851.0" y="756.0" width="5" height="5"/>
<rect x="904.0" y="756.0" width="5" height="5"/>
<rect x="936.0" y="756.0" width="5" height="5"/>
<rect x="877.0" y="776.0" width="5" height="5"/>
<rect x="904.0" y="776.0" width="5" height="5"/>
<rect x="202.0" y="835.0" width="5" height="5"/>
<rect x="326.0" y="835.0" width="5" height="5"/>
<rect x="431.0" y="835.0" width="5" height="5"/>
<rect x="510.0" y="835.0" width="5" height="5"/>
<rect x="667.0" y="835.0" width="5" height="5"/>
<rect x="759.0" y="835.0" width="5" height="5"/>
<rect x="838.0" y="835.0" width="5" height="5"/>
<rect x="877.0" y="835.0" width="5" height="5"/>
<rect x="904.0" y="835.0" width="5" height="5"/>
<rect x="936.0" y="835.0" width="5" height="5"/>
<rect x="523.0" y="815.0" width="5" height="5"/>
<rect x="602.0" y="815.0" width="5" height="5"/>
<rect x="641.0" y="815.0" width="5" height="5"/>
<rect x="838.0" y="815.0" width="5" height="5"/>
<rect x="280.0" y="894.0" width="5" height="5"/>
</g>
<g font-family="Liberation Sans, sans-serif" font-weight="bold" font-size="9.3px" stroke-width="0.18" paint-order="stroke">
<text x="105.5" y="538.9" fill="#0c0c0c" stroke="#0c0c0c" textLength="1205.0" lengthAdjust="spacing">.MODEL MJL3281 npn (IS=9.8145e-12 BF=438.0 NF=1.00 VAF=38 IKF=19.0 ISE=1.0e-12 NE=1.1237388682 BR=4.98985 NR=1.09511 VAR=4.32026 IKR=4.37516 ISC=3.25e-13 NC=3.96875 RB=3.997 RE=0.00 RC=0.06 XTB=0.115253 XTI=1.03146 EG=1.11986 CJE=1.144e-08 VJE=0.46</text>
<text x="105.5" y="551.8" fill="#0c0c0c" stroke="#0c0c0c" textLength="1195.6" lengthAdjust="spacing">.MODEL 2SD882 NPN(Is=282f Xti=3 Eg=1.11 Vaf=100 Bf=200.7 Ise=288.7f Ne=1.368 Ikf=20 Nk=1.235 Xtb=1.5 Var=100 Br=52.37 Isc=8.515p Nc=1.527 Ikr=.2617 Rc=15.88m Cjc=166.3p Mjc=.4069 Vjc=.3905 Fc=.5 Cje=291.8p Mje=.3606 Vje=.75 Tr=10n Tf=1.551n Itf=1 Xtf=0 Vtf=10)</text>
<text x="105.5" y="564.7" fill="#0c0c0c" stroke="#0c0c0c" textLength="665.1" lengthAdjust="spacing">.MODEL 1N5404 D(IS=2.61339e-12 RS=0.0110501 N=1.20576 EG=0.6 XTI=3.1271 BV=400 IBV=1e-05 CJO=1e-11 VJ=0.7 M=0.5 FC=0.5 TT=1e-09 KF=0 AF=1)</text>
<text x="105.5" y="577.5" fill="#0c0c0c" stroke="#0c0c0c" textLength="630.5" lengthAdjust="spacing">.MODEL 1N4004 D (IS=5.31656e-08 RS=0.0392384 N=2 EG=0.6 XTI=0.05 BV=400 IBV=5e-08 CJO=1e-11 VJ=0.7 M=0.5 FC=0.5 TT=1e-09 KF=0 AF=1)</text>
<text x="105.5" y="590.4" fill="#0c0c0c" stroke="#0c0c0c" textLength="489.2" lengthAdjust="spacing">.MODEL LEDRot D (IS=93.1P RS=42M N=3.73 BV=4 IBV=10U CJO=2.97P VJ=.75 M=.333 TT=4.32U type=LED-rot)</text>
<text x="-2.6" y="561.9" fill="#1c189c" stroke="#1c189c" textLength="41.6" lengthAdjust="spacingAndGlyphs">28V~/3.2A</text>
<text x="10.4" y="872.9" fill="#0c0c0c" stroke="#0c0c0c">;tran 0.7</text>
<text x="883.7" y="587.8" fill="#0c0c0c" stroke="#0c0c0c" textLength="113.2" lengthAdjust="spacing">.step param R list 15 10 2</text>
<text x="971.6" y="876.8" fill="#0c0c0c" stroke="#0c0c0c">.ac oct 50 1 10meg</text>
<text x="673.9" y="666.6" fill="#0c0c0c" stroke="#0c0c0c">.include MC33072.MOD</text>
<text x="443.6" y="831" fill="#0c0c0c" stroke="#0c0c0c">.include TL431A.mod</text>
<text x="525.8" y="653.8" fill="#000090" stroke="#000090">5V</text>
<text x="213.7" y="702.6" fill="#0c0c0c" stroke="#0c0c0c">V3</text>
<text x="213.7" y="735.2" fill="#0c0c0c" stroke="#0c0c0c">36</text>
<text x="213.7" y="746.8" fill="#0c0c0c" stroke="#0c0c0c">Rser=1</text>
<text x="239.2" y="748.8" fill="#0c0c0c" stroke="#0c0c0c">MC33072</text>
<text x="264.8" y="722.8" fill="#0c0c0c" stroke="#0c0c0c">U3</text>
<text x="305.2" y="640.9" fill="#0c0c0c" stroke="#0c0c0c" text-anchor="end">C8</text>
<text x="305.6" y="659.5" fill="#0c0c0c" stroke="#0c0c0c" text-anchor="end">220p</text>
<text x="338.5" y="716.8" fill="#0c0c0c" stroke="#0c0c0c" text-anchor="middle">R2</text>
<text x="338.3" y="740.5" fill="#0c0c0c" stroke="#0c0c0c" text-anchor="middle">10k</text>
<text x="384" y="709.6" fill="#0c0c0c" stroke="#0c0c0c" text-anchor="middle">V2</text>
<text x="384" y="747" fill="#0c0c0c" stroke="#0c0c0c" text-anchor="middle">0</text>
<text x="317.7" y="791.2" fill="#0c0c0c" stroke="#0c0c0c">R21</text>
<text x="317.7" y="806.1" fill="#0c0c0c" stroke="#0c0c0c">10k</text>
<text x="442" y="692.7" fill="#0c0c0c" stroke="#0c0c0c">P2a</text>
<text x="442" y="751.6" fill="#0c0c0c" stroke="#0c0c0c">P2b</text>
<text x="442" y="791.2" fill="#0c0c0c" stroke="#0c0c0c">R17</text>
<text x="442.5" y="806.1" fill="#0c0c0c" stroke="#0c0c0c">1</text>
<text x="475.8" y="657.3" fill="#0c0c0c" stroke="#0c0c0c" text-anchor="middle">R18</text>
<text x="476" y="681" fill="#0c0c0c" stroke="#0c0c0c" text-anchor="middle">9k</text>
<text x="535.3" y="728.4" fill="#0c0c0c" stroke="#0c0c0c">V5</text>
<text x="535.6" y="761.7" fill="#0c0c0c" stroke="#0c0c0c">5</text>
<text x="535.6" y="772.4" fill="#0c0c0c" stroke="#0c0c0c">Rser=0.1</text>
<text x="612.7" y="685.1" fill="#0c0c0c" stroke="#0c0c0c">P1a</text>
<text x="612.7" y="790.5" fill="#0c0c0c" stroke="#0c0c0c">P1b</text>
<text x="646.7" y="623.6" fill="#0c0c0c" stroke="#0c0c0c">D9</text>
<text x="646.7" y="649.4" fill="#0c0c0c" stroke="#0c0c0c">1N4148</text>
<text x="651.2" y="672.9" fill="#0c0c0c" stroke="#0c0c0c">R25</text>
<text x="651" y="687.6" fill="#0c0c0c" stroke="#0c0c0c">4k7</text>
<text x="651.6" y="790.5" fill="#0c0c0c" stroke="#0c0c0c">R11</text>
<text x="651.6" y="805.5" fill="#0c0c0c" stroke="#0c0c0c">2k5</text>
<text x="675" y="682.6" fill="#0c0c0c" stroke="#0c0c0c">MC33072</text>
<text x="676.2" y="695.3" fill="#0c0c0c" stroke="#0c0c0c">U2</text>
<text x="705.7" y="594" fill="#0c0c0c" stroke="#0c0c0c" text-anchor="middle">L2</text>
<text x="705.6" y="616" fill="#0c0c0c" stroke="#0c0c0c" text-anchor="middle">100n</text>
<text x="725" y="697.1" fill="#0c0c0c" stroke="#0c0c0c" text-anchor="middle">R15</text>
<text x="725" y="720.4" fill="#0c0c0c" stroke="#0c0c0c" text-anchor="middle">220</text>
<text x="784" y="699" fill="#0c0c0c" stroke="#0c0c0c" text-anchor="middle">L1</text>
<text x="784.2" y="720.4" fill="#0c0c0c" stroke="#0c0c0c" text-anchor="middle">100n</text>
<text x="699.6" y="725.7" fill="#0c0c0c" stroke="#0c0c0c">C9</text>
<text x="699.2" y="745.6" fill="#0c0c0c" stroke="#0c0c0c">47p</text>
<text x="876.6" y="624.3" fill="#0c0c0c" stroke="#0c0c0c" text-anchor="middle">R16</text>
<text x="877.3" y="649.5" fill="#0c0c0c" stroke="#0c0c0c" text-anchor="middle">220</text>
<text x="879.5" y="674.6" fill="#0c0c0c" stroke="#0c0c0c" text-anchor="middle">1N4148</text>
<text x="882.8" y="686.1" fill="#0c0c0c" stroke="#0c0c0c" text-anchor="middle">D10</text>
<text x="915" y="685.7" fill="#0c0c0c" stroke="#0c0c0c">L3</text>
<text x="915" y="702.8" fill="#0c0c0c" stroke="#0c0c0c">100n</text>
<text x="876.6" y="709.6" fill="#0c0c0c" stroke="#0c0c0c" text-anchor="middle">R12</text>
<text x="876" y="733.6" fill="#0c0c0c" stroke="#0c0c0c" text-anchor="middle">10k</text>
<text x="879.3" y="749.1" fill="#0c0c0c" stroke="#0c0c0c" text-anchor="middle">C6</text>
<text x="878.6" y="772.6" fill="#0c0c0c" stroke="#0c0c0c" text-anchor="middle">1p</text>
<text x="829.2" y="772.7" fill="#0c0c0c" stroke="#0c0c0c">1N5404</text>
<text x="768.8" y="770.5" fill="#0c0c0c" stroke="#0c0c0c">BC337-40</text>
<text x="753.4" y="787.6" fill="#0c0c0c" stroke="#0c0c0c">Q3</text>
<text x="817.4" y="781.6" fill="#0c0c0c" stroke="#0c0c0c" text-anchor="middle">R9</text>
<text x="817.2" y="805.7" fill="#0c0c0c" stroke="#0c0c0c" text-anchor="middle">100</text>
<text x="811.3" y="827.7" fill="#0c0c0c" stroke="#0c0c0c" text-anchor="middle">R7</text>
<text x="810.8" y="852" fill="#0c0c0c" stroke="#0c0c0c" text-anchor="middle">0.2</text>
<text x="883.5" y="822.8" fill="#0c0c0c" stroke="#0c0c0c">D11</text>
<text x="909.8" y="797.2" fill="#0c0c0c" stroke="#0c0c0c">C7</text>
<text x="909.8" y="817.3" fill="#0c0c0c" stroke="#0c0c0c">1µ</text>
<text x="947.6" y="797.8" fill="#0c0c0c" stroke="#0c0c0c">R24</text>
<text x="947.6" y="813.2" fill="#0c0c0c" stroke="#0c0c0c">{R}</text>
<text x="1041.2" y="794.4" fill="#0c0c0c" stroke="#0c0c0c">I1</text>
<text x="1040.4" y="827.1" fill="#0c0c0c" stroke="#0c0c0c">0</text>
<text x="1040.4" y="839.1" fill="#0c0c0c" stroke="#0c0c0c">AC 1 0</text>
<text x="856.4" y="859.9" fill="#0c0c0c" stroke="#0c0c0c">Q5</text>
<text x="856.4" y="874.8" fill="#0c0c0c" stroke="#0c0c0c">BC547B</text>
<text x="797" y="881.2" fill="#0c0c0c" stroke="#0c0c0c" text-anchor="middle">R14</text>
<text x="797" y="905.1" fill="#0c0c0c" stroke="#0c0c0c" text-anchor="middle">470</text>
<text x="213.7" y="853.7" fill="#0c0c0c" stroke="#0c0c0c">V4</text>
<text x="213.9" y="886.6" fill="#0c0c0c" stroke="#0c0c0c">5</text>
<text x="213.7" y="896.8" fill="#0c0c0c" stroke="#0c0c0c">Rser=0.1</text>
<text x="370.8" y="853.7" fill="#0c0c0c" stroke="#0c0c0c" text-anchor="middle">V6</text>
<text x="401.2" y="872.9" fill="#0c0c0c" stroke="#0c0c0c">Strom</text>
<text x="386.7" y="885.7" fill="#0c0c0c" stroke="#0c0c0c">PULSE(1000 300 0.5 1u 1u 0.1)</text>
<text x="541.8" y="853.5" fill="#0c0c0c" stroke="#0c0c0c" text-anchor="middle">V1</text>
<text x="572.2" y="872.7" fill="#0c0c0c" stroke="#0c0c0c">Spannung</text>
<text x="555.6" y="884.8" fill="#0c0c0c" stroke="#0c0c0c">PULSE(10000 5500 0.3 1u 1u 0.1)</text>
<text x="453.6" y="849.6" fill="#0c0c0c" stroke="#0c0c0c">500</text>
<text x="462.4" y="862" fill="#0c0c0c" stroke="#0c0c0c">500</text>
<text x="622.8" y="852" fill="#0c0c0c" stroke="#0c0c0c">0</text>
<text x="631" y="863.1" fill="#0c0c0c" stroke="#0c0c0c">10000</text>
<text x="803" y="636" fill="#0c0c0c" stroke="#0c0c0c" transform="rotate(-90 803 636)">Q2</text>
<text x="817" y="636.8" fill="#0c0c0c" stroke="#0c0c0c" transform="rotate(-90 817 636.8)" textLength="36.2" lengthAdjust="spacing">2SD882</text>
<text x="842.4" y="603.6" fill="#0c0c0c" stroke="#0c0c0c" transform="rotate(-90 842.4 603.6)">Q4</text>
<text x="856.4" y="603.2" fill="#0c0c0c" stroke="#0c0c0c" transform="rotate(-90 856.4 603.2)" textLength="42.5" lengthAdjust="spacing">MJL3281</text>
</g>
<rect x="0" y="928" width="1312" height="1" fill="#dedede"/>
<rect x="0" y="929" width="1312" height="3" fill="#f3f3f3"/>
<rect x="0" y="929" width="617" height="1" fill="#ffffff"/>
<rect x="0" y="929" width="4" height="3" fill="#e2e2e2"/>
<rect x="4" y="930" width="613" height="1" fill="#989898"/>
<rect x="616" y="930" width="1" height="2" fill="#989898"/>
<rect x="4" y="931" width="612" height="1" fill="#fdfdfd"/>
</svg>
</body></html>
